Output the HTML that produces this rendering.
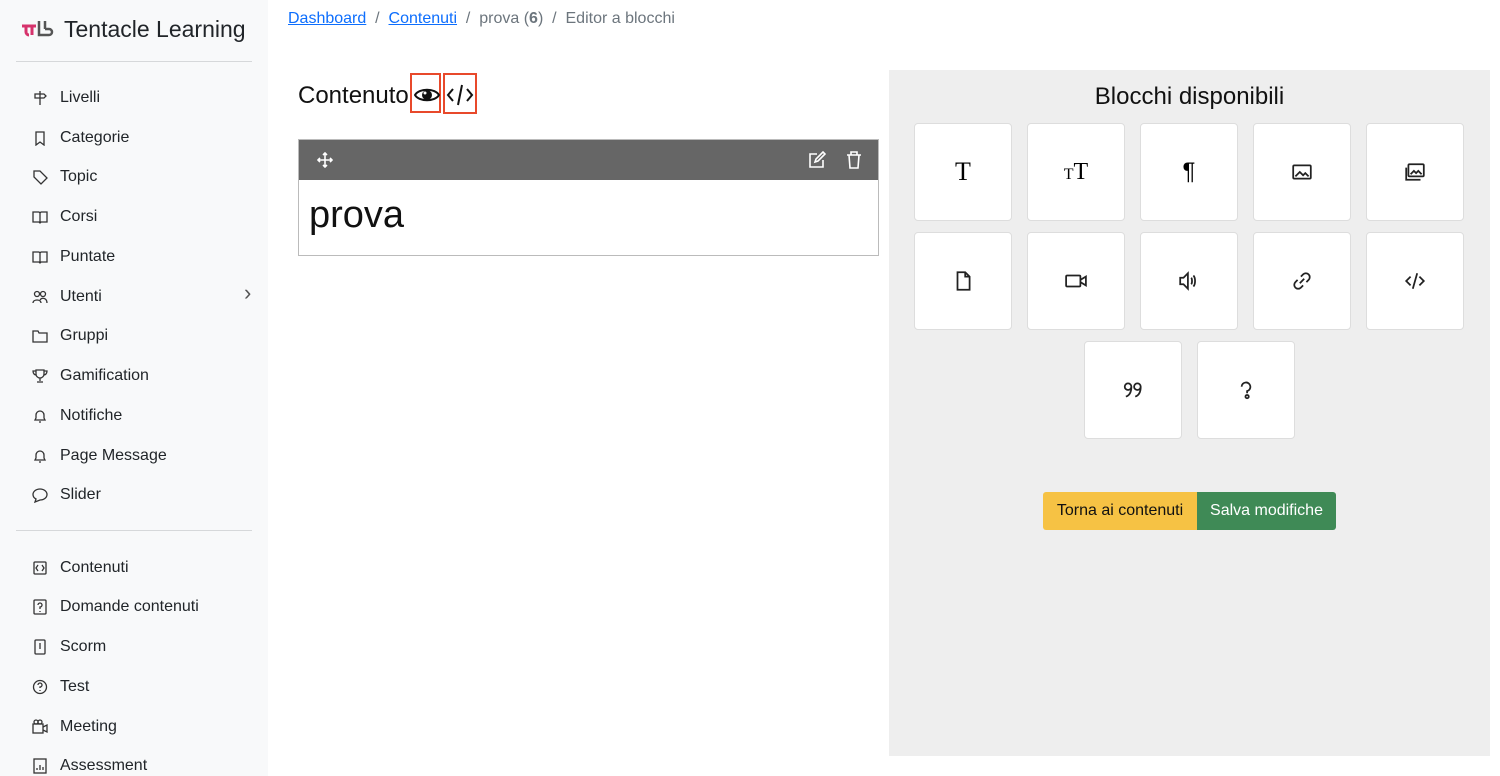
<!DOCTYPE html><html><head><style>
body{margin:0;width:1500px;height:776px;overflow:hidden;font-family:"Liberation Sans",sans-serif;background:#fff;position:relative}
.sb{position:absolute;left:0;top:0;width:268px;height:776px;background:#f8f9fa}
.logo{position:absolute;left:20px;top:16px;font-size:23px;color:#212529;display:flex;align-items:center}
.hr{position:absolute;left:16px;width:236px;border-top:1px solid #d6d8da}
.it{position:absolute;left:32px;font-size:16px;color:#212529;display:flex;align-items:center;margin-top:1px}
.it svg{width:16px;height:16px;margin-right:12px;fill:none;stroke:#333;stroke-width:1.3}
.bc{position:absolute;left:288px;top:10px;font-size:16px;color:#6c757d}
.bc a{color:#0d6efd;text-decoration:underline}
.panel{position:absolute;left:889px;top:70px;width:601px;height:686px;background:#eee}
.tile{position:absolute;width:98px;height:98px;background:#fff;border:1px solid #ddd;border-radius:4px;box-sizing:border-box;display:flex;align-items:center;justify-content:center}
.tile svg{width:22px;height:22px;fill:none;stroke:#222;stroke-width:1.6}
</style></head><body>
<div class="sb">
<div class="logo"><svg width="40" height="24" viewBox="0 0 40 24" style="margin-right:4px"><path d="M2 8h14M6 8v6a3 3 0 0 0 3 3M12 8v9" fill="none" stroke="#d6336c" stroke-width="3"/><path d="M19 3v14h10a3 3 0 0 0 0-6h-4M25 3v8" fill="none" stroke="#555" stroke-width="2.5"/></svg>Tentacle Learning</div>
<div class="hr" style="top:61px"></div>
<div class="it" style="top:88px"><svg viewBox="0 0 16 16"><path d="M8 1v14M3 4h9l2 2-2 2H3z"/></svg>Livelli</div>
<div class="it" style="top:128px"><svg viewBox="0 0 16 16"><path d="M4 2h8v13l-4-3-4 3z"/></svg>Categorie</div>
<div class="it" style="top:167px"><svg viewBox="0 0 16 16"><path d="M2 2h6l7 7-6 6-7-7z"/></svg>Topic</div>
<div class="it" style="top:207px"><svg viewBox="0 0 16 16"><path d="M1 3h6l1 1 1-1h6v10H9l-1 1-1-1H1zM8 4v10"/></svg>Corsi</div>
<div class="it" style="top:247px"><svg viewBox="0 0 16 16"><path d="M1 3h6l1 1 1-1h6v10H9l-1 1-1-1H1zM8 4v10"/></svg>Puntate</div>
<div class="it" style="top:287px"><svg viewBox="0 0 16 16"><circle cx="5" cy="5" r="2.5"/><circle cx="11" cy="5" r="2.5"/><path d="M1 14c0-4 8-4 8 0M8 11c2-3 7-2 7 3"/></svg>Utenti</div>
<div style="position:absolute;left:244px;top:280px;font-size:22px;color:#555">›</div>
<div class="it" style="top:326px"><svg viewBox="0 0 16 16"><path d="M1 3h5l1 2h8v9H1z"/></svg>Gruppi</div>
<div class="it" style="top:366px"><svg viewBox="0 0 16 16"><path d="M4 2h8v4a4 4 0 0 1-8 0zM8 10v3M5 14h6M4 3H1c0 3 2 4 3 4M12 3h3c0 3-2 4-3 4"/></svg>Gamification</div>
<div class="it" style="top:406px"><svg viewBox="0 0 16 16"><path d="M3 12h10l-1-2V7a4 4 0 0 0-8 0v3zM7 14h2"/></svg>Notifiche</div>
<div class="it" style="top:446px"><svg viewBox="0 0 16 16"><path d="M3 12h10l-1-2V7a4 4 0 0 0-8 0v3zM7 14h2"/></svg>Page Message</div>
<div class="it" style="top:485px"><svg viewBox="0 0 16 16"><path d="M8 2c4 0 7 2.5 7 5.5S12 13 8 13l-5 2 1-3C2 11 1 9 1 7.5 1 4.5 4 2 8 2z"/></svg>Slider</div>
<div class="hr" style="top:530px"></div>
<div class="it" style="top:558px"><svg viewBox="0 0 16 16"><rect x="2" y="2" width="12" height="12" rx="1"/><path d="M6 5L4 8l2 3M10 5l2 3-2 3"/></svg>Contenuti</div>
<div class="it" style="top:597px"><svg viewBox="0 0 16 16"><rect x="2" y="1" width="12" height="14" rx="1"/><path d="M6 6a2 2 0 1 1 2 2v2M8 12v1"/></svg>Domande contenuti</div>
<div class="it" style="top:637px"><svg viewBox="0 0 16 16"><rect x="3" y="1" width="10" height="14" rx="1"/><path d="M8 4v6"/></svg>Scorm</div>
<div class="it" style="top:677px"><svg viewBox="0 0 16 16"><circle cx="8" cy="8" r="6.5"/><path d="M6 6a2 2 0 1 1 2 2v1M8 11v1"/></svg>Test</div>
<div class="it" style="top:717px"><svg viewBox="0 0 16 16"><rect x="1" y="5" width="10" height="9"/><path d="M11 8l4-2v7l-4-2"/><circle cx="4" cy="3" r="2"/><circle cx="8" cy="3" r="2"/></svg>Meeting</div>
<div class="it" style="top:756px"><svg viewBox="0 0 16 16"><rect x="2" y="1" width="12" height="14"/><path d="M5 12v-2M8 12V7M11 12V9"/></svg>Assessment</div>
</div>
<div class="bc"><a>Dashboard</a> &nbsp;/&nbsp; <a>Contenuti</a> &nbsp;/&nbsp; prova (<b>6</b>) &nbsp;/&nbsp; Editor a blocchi</div>
<div style="position:absolute;left:298px;top:82px;font-size:24px;color:#111">Contenuto</div>
<div style="position:absolute;left:410px;top:73px;width:31px;height:40px;border:2px solid #e8492b;box-sizing:border-box"></div>
<div style="position:absolute;left:443px;top:73px;width:34px;height:41px;border:2px solid #e8492b;box-sizing:border-box"></div>
<svg style="position:absolute;left:414px;top:85px" width="26" height="20" viewBox="0 0 26 20"><path d="M1 10C5 3 21 3 25 10 21 17 5 17 1 10z" fill="none" stroke="#111" stroke-width="2"/><circle cx="13" cy="10" r="5" fill="#111"/><circle cx="11" cy="8" r="1.5" fill="#fff"/></svg>
<svg style="position:absolute;left:446px;top:82px" width="28" height="26" viewBox="0 0 28 26" fill="none" stroke="#111" stroke-width="2"><path d="M7 7l-5 6 5 6M21 7l5 6-5 6M16 3l-4 20"/></svg>
<div style="position:absolute;left:298px;top:139px;width:581px;height:117px;border:1px solid #bbb;box-sizing:border-box">
<div style="height:40px;background:#666;position:relative">
<svg style="position:absolute;left:18px;top:12px" width="16" height="16" viewBox="0 0 16 16" fill="none" stroke="#fff" stroke-width="1.6"><path d="M8 1v14M1 8h14M6 3l2-2 2 2M6 13l2 2 2-2M3 6L1 8l2 2M13 6l2 2-2 2"/></svg>
<svg style="position:absolute;left:509px;top:11px" width="18" height="18" viewBox="0 0 18 18" fill="none" stroke="#fff" stroke-width="1.6"><path d="M9 3H2v13h13V9M7 11l1-3 7-7 2 2-7 7z"/></svg>
<svg style="position:absolute;left:547px;top:11px" width="16" height="18" viewBox="0 0 16 18" fill="none" stroke="#fff" stroke-width="1.6"><path d="M1 4h14M5 4V1h6v3M3 4l1 13h8l1-13"/></svg>
</div>
<div style="font-size:38px;color:#111;padding:14px 10px">prova</div>
</div>
<div class="panel">
<div style="position:absolute;left:0;width:601px;top:13px;text-align:center;font-size:24px;color:#111">Blocchi disponibili</div>
</div>
<div class="tile" style="left:914px;top:123px"><span style="font-family:'Liberation Serif';font-size:26px">T</span></div>
<div class="tile" style="left:1027px;top:123px"><span style="font-family:'Liberation Serif';font-size:24px"><small style="font-size:16px">T</small>T</span></div>
<div class="tile" style="left:1140px;top:123px"><span style="font-size:24px">¶</span></div>
<div class="tile" style="left:1253px;top:123px"><svg viewBox="0 0 20 20"><rect x="2" y="4" width="16" height="12" rx="1"/><path d="M4 14l4-4 3 3 2-2 3 3"/></svg></div>
<div class="tile" style="left:1366px;top:123px"><svg viewBox="0 0 20 20"><rect x="4" y="3" width="14" height="11" rx="1"/><path d="M2 6v11h13M6 12l3-3 2 2 2-2 3 3"/></svg></div>
<div class="tile" style="left:914px;top:232px"><svg viewBox="0 0 20 20"><path d="M5 2h7l4 4v12H5zM12 2v4h4"/></svg></div>
<div class="tile" style="left:1027px;top:232px"><svg viewBox="0 0 20 20"><rect x="1" y="5" width="13" height="10" rx="1"/><path d="M14 9l5-3v8l-5-3"/></svg></div>
<div class="tile" style="left:1140px;top:232px"><svg viewBox="0 0 20 20"><path d="M2 7h3l4-4v14l-4-4H2zM12 7c1 1 1 5 0 6M14 5c2 2 2 8 0 10"/></svg></div>
<div class="tile" style="left:1253px;top:232px"><svg viewBox="0 0 20 20"><path d="M8 12l4-4M9 6l2-2a3 3 0 0 1 5 5l-2 2M11 14l-2 2a3 3 0 0 1-5-5l2-2"/></svg></div>
<div class="tile" style="left:1366px;top:232px"><svg viewBox="0 0 20 20"><path d="M6 6l-4 4 4 4M14 6l4 4-4 4M12 3L8 17"/></svg></div>
<div class="tile" style="left:1084px;top:341px"><svg viewBox="0 0 20 20"><circle cx="5.5" cy="7" r="3"/><path d="M8.5 7c0 5-2 8-5 9"/><circle cx="14" cy="7" r="3"/><path d="M17 7c0 5-2 8-5 9"/></svg></div>
<div class="tile" style="left:1197px;top:341px"><svg viewBox="0 0 20 20"><path d="M6 7a4 4 0 1 1 5 4v2"/><circle cx="11" cy="16" r="1.5"/></svg></div>
<div style="position:absolute;left:1043px;top:492px;width:154px;height:38px;background:#f6c244;border-radius:3px 0 0 3px;font-size:16px;line-height:38px;text-align:center;color:#111">Torna ai contenuti</div>
<div style="position:absolute;left:1197px;top:492px;width:139px;height:38px;background:#3f8a56;border-radius:0 3px 3px 0;font-size:16px;line-height:38px;text-align:center;color:#fff">Salva modifiche</div>
</body></html>
